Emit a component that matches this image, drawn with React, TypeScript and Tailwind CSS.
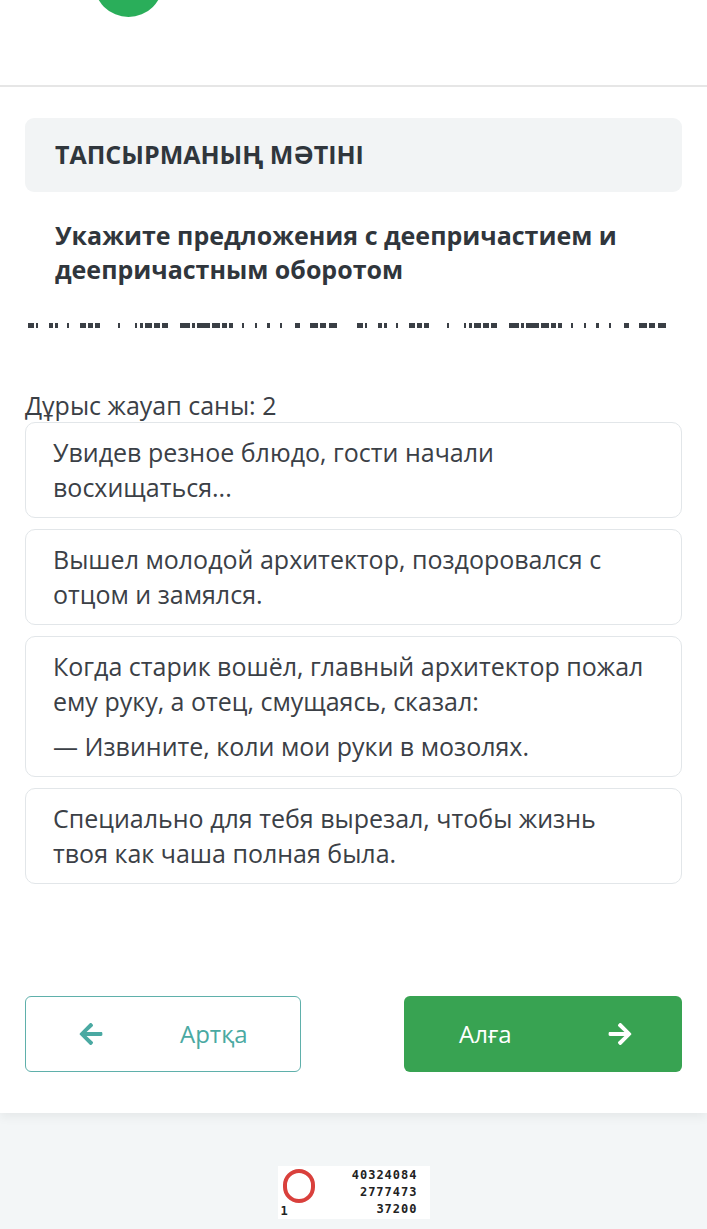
import { FaArrowLeft, FaArrowRight } from "react-icons/fa"

const dashes: [number, number][] = [
  [28, 34], [36, 38], [49, 53], [55, 58], [67, 69], [80, 86], [88, 93], [95, 100],
  [118, 120], [135, 137], [140, 143], [145, 152], [154, 160], [162, 168],
  [180, 190], [192, 195], [197, 210], [212, 220], [222, 227], [229, 233],
  [242, 244], [255, 257], [267, 270], [280, 282], [295, 300], [310, 318], [320, 326], [329, 337],
]

const answers: string[][] = [
  ["Увидев резное блюдо, гости начали восхищаться..."],
  ["Вышел молодой архитектор, поздоровался с отцом и замялся."],
  [
    "Когда старик вошёл, главный архитектор пожал ему руку, а отец, смущаясь, сказал:",
    "— Извините, коли мои руки в мозолях.",
  ],
  ["Специально для тебя вырезал, чтобы жизнь твоя как чаша полная была."],
]

function CutLine() {
  // bottoms of a text line that got clipped — drawn twice
  const all = [...dashes, ...dashes.map(([a, b]) => [a + 329, b + 329] as [number, number])]
  return (
    <div className="relative h-[6px] -mx-[25px]">
      {all.map(([a, b], i) => (
        <div key={i} className="absolute top-0 h-[5px] bg-[#3a3f45]" style={{ left: a, width: b - a }} />
      ))}
    </div>
  )
}

function Stamp() {
  return (
    <div className="w-[152px] h-[53px] bg-white flex items-stretch px-[3px] py-[1px] font-['DejaVu_Sans_Mono',monospace] font-bold text-[12px] leading-[17px] text-[#222]">
      <div className="flex flex-col justify-between w-[40px]">
        <div className="w-[32px] h-[34px] rounded-full border-[4px] border-[#d9403c] mt-[2px] ml-[2px]" />
        <span className="leading-[14px]">1</span>
      </div>
      <div className="flex-1 flex flex-col items-end pr-[9px] tracking-[1px]">
        <span>40324084</span>
        <span>2777473</span>
        <span>37200</span>
      </div>
    </div>
  )
}

export default function App() {
  return (
    <div className="min-h-[1229px] bg-[#f3f6f7] font-['Open_Sans',sans-serif] text-[#3b4046]">
      <div className="bg-white shadow-[0_4px_10px_rgba(0,0,0,0.06)]">
        <div className="h-[87px] overflow-hidden border-b-2 border-[#e6e6e6]">
          <div className="ml-[94px] -mt-[52px] w-[69px] h-[69px] rounded-full bg-[#2aae5a]" />
        </div>

        <div className="px-[25px] pt-[31px] pb-[41px]">
          <div className="h-[74px] rounded-[9px] bg-[#f2f4f5] flex items-center pl-[30px]">
            <h2 className="text-[25px] font-bold text-[#30363c]">ТАПСЫРМАНЫҢ МӘТІНІ</h2>
          </div>

          <p className="mt-[26px] pl-[30px] pr-[40px] text-[25px] leading-[34px] font-bold text-[#30363c]">
            Укажите предложения с деепричастием и деепричастным оборотом
          </p>

          <div className="mt-[37px]">
            <CutLine />
          </div>

          <p className="mt-[60px] text-[25px] leading-[32px]">Дұрыс жауап саны: 2</p>

          <div className="mt-[1px] flex flex-col gap-[11px]">
            {answers.map((paras, i) => (
              <div key={i} className="rounded-[10px] border border-[#e2e6e9] bg-white pl-[27px] pr-[30px] py-[12px] text-[25px] leading-[35px] flex flex-col gap-[10px]">
                {paras.map((t, j) => (
                  <p key={j}>{t}</p>
                ))}
              </div>
            ))}
          </div>

          <div className="mt-[112px] flex justify-between">
            <button className="w-[276px] h-[76px] rounded-[6px] border border-[#5fb0ab] bg-white text-[#4aa9a2] text-[24px] flex items-center pl-[52px]">
              <FaArrowLeft className="w-[26px] h-[26px]" />
              <span className="ml-[76px]">Артқа</span>
            </button>
            <button className="w-[278px] h-[76px] rounded-[6px] bg-[#38a352] text-white text-[24px] flex items-center pl-[55px]">
              <span>Алға</span>
              <FaArrowRight className="w-[26px] h-[26px] ml-[95px]" />
            </button>
          </div>
        </div>
      </div>

      <div className="flex justify-center pt-[53px] pb-[11px]">
        <Stamp />
      </div>
    </div>
  )
}
